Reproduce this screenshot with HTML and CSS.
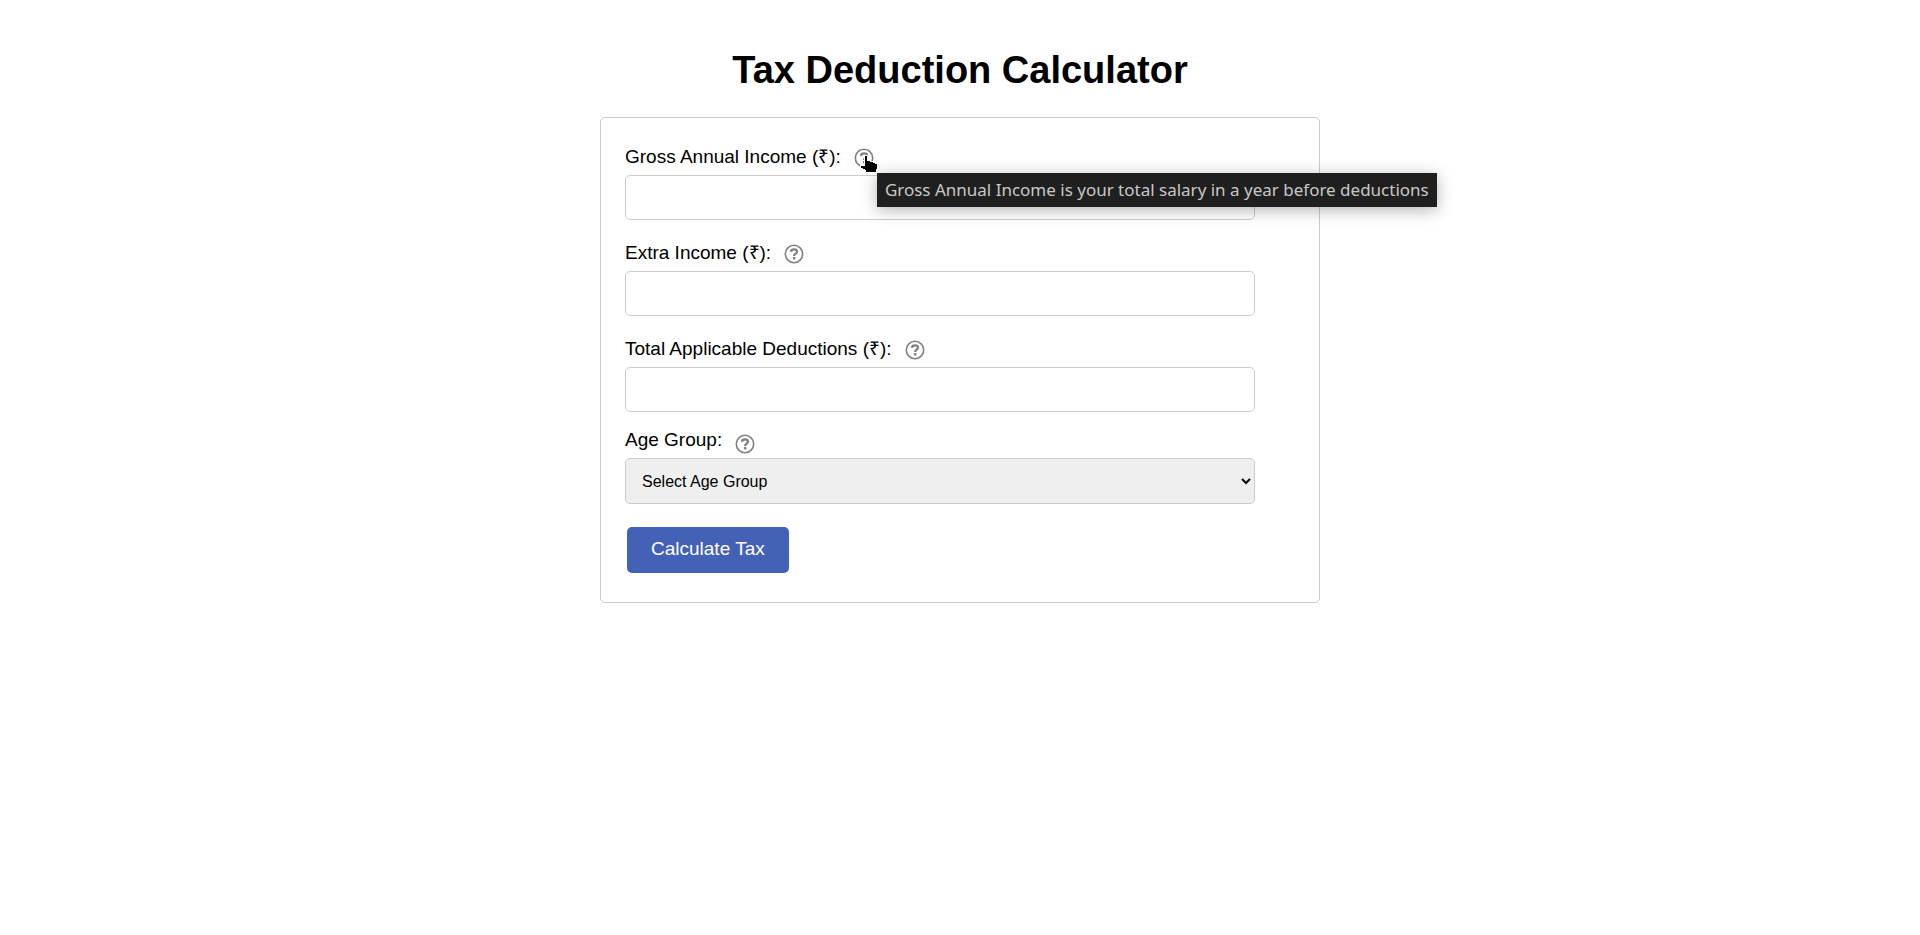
FILE: index.html
```html
<!DOCTYPE html>
<html lang="en">
<head>
<meta charset="utf-8">
<meta name="viewport" content="width=device-width, initial-scale=1">
<title>Tax Deduction Calculator</title>
<link rel="stylesheet" href="styles.css">
</head>
<body>
<svg class="sprite" aria-hidden="true">
  <symbol id="help" viewBox="0 0 20 20">
    <circle cx="10" cy="10" r="8.7" fill="none" stroke="currentColor" stroke-width="1.6"/>
    <path d="M6.8 7.8C7.1 6 8.2 5.3 10 5.3C11.9 5.3 13 6.2 13 7.6C13 9.7 10.2 9.5 10.1 12" fill="none" stroke="currentColor" stroke-width="2.3"/>
    <rect x="8.9" y="13" width="2.5" height="2.4" rx="0.6" fill="currentColor"/>
  </symbol>
</svg>
<main class="page">
  <h1 class="title">Tax Deduction Calculator</h1>
  <form class="card">
    <div class="field">
      <div class="caption">
        <label for="income">Gross Annual Income (₹):</label>
        <span class="help">
          <svg class="help-icon" aria-hidden="true"><use href="#help"/></svg>
          <svg class="pointer" viewBox="0 0 18 18" aria-hidden="true">
            <path d="M5 1H7V6H10V7H13V8H15V9H17V14H16V17H6V15H5V14H3V13H1V11H5Z" fill="#000" stroke="#fff" stroke-width="2" paint-order="stroke" stroke-linejoin="round"/>
          </svg>
          <span class="tooltip" role="tooltip">Gross Annual Income is your total salary in a year before deductions</span>
        </span>
      </div>
      <input class="control" id="income" type="text">
    </div>
    <div class="field">
      <div class="caption">
        <label for="extra">Extra Income (₹):</label>
        <span class="help"><svg class="help-icon" aria-hidden="true"><use href="#help"/></svg></span>
      </div>
      <input class="control" id="extra" type="text">
    </div>
    <div class="field">
      <div class="caption">
        <label for="deductions">Total Applicable Deductions (₹):</label>
        <span class="help"><svg class="help-icon" aria-hidden="true"><use href="#help"/></svg></span>
      </div>
      <input class="control" id="deductions" type="text">
    </div>
    <div class="field field-age">
      <div class="caption">
        <label for="age">Age Group:</label>
        <span class="help"><svg class="help-icon" aria-hidden="true"><use href="#help"/></svg></span>
      </div>
      <select class="control" id="age">
        <option>Select Age Group</option>
      </select>
    </div>
    <button class="submit" type="button">Calculate Tax</button>
  </form>
</main>
</body>
</html>
```
FILE: styles.css
```css
* {
  box-sizing: border-box;
}

body {
  margin: 0;
  padding: 46px 24px;
  background: #fff;
  color: #000;
  font-family: "Liberation Sans", Arial, sans-serif;
  font-size: 19px;
  line-height: 24px;
}

.sprite {
  position: absolute;
  width: 0;
  height: 0;
}

.page {
  max-width: 720px;
  margin: 0 auto;
}

.title {
  margin: 0 0 23px;
  font-size: 38px;
  line-height: 48px;
  text-align: center;
}

.card {
  padding: 27px 24px 29px;
  border: 1px solid #ccc;
  border-radius: 5px;
}

.field {
  margin-bottom: 21px;
}

.caption {
  display: flex;
  align-items: center;
  gap: 13px;
  margin-bottom: 6px;
}

.help {
  position: relative;
  display: flex;
  padding-top: 2px;
  color: #808080;
}

.help-icon {
  width: 20px;
  height: 20px;
}

.control {
  display: block;
  width: 94%;
  height: 45px;
  padding: 0 12px;
  border: 1px solid #ccc;
  border-radius: 5px;
  background: #fff;
  color: #000;
  font-family: inherit;
  font-size: 16px;
}

select.control {
  height: 46px;
  background: #efefef;
}

.field-age {
  margin-top: -5px;
  margin-bottom: 23px;
}

.field-age .caption {
  align-items: flex-start;
  margin-bottom: 4px;
}

.field-age .help {
  padding-top: 6px;
}

.submit {
  display: block;
  margin: 0 2px;
  padding: 10px 24px 12px;
  border: 0;
  border-radius: 5px;
  background: #4362b6;
  color: #fff;
  font-family: inherit;
  font-size: 19px;
  line-height: 24px;
}

.pointer {
  position: absolute;
  left: 6px;
  top: 9px;
  z-index: 2;
  width: 18px;
  height: 18px;
  overflow: visible;
}

.tooltip {
  position: absolute;
  left: 23px;
  top: 27px;
  z-index: 1;
  padding: 5px 8px;
  background: #1f1f1f;
  box-shadow: 0 3px 16px rgba(0, 0, 0, 0.3);
  color: #c8c8c8;
  font-family: "Noto Sans", sans-serif;
  font-size: 17px;
  line-height: 24px;
  white-space: nowrap;
}
```
